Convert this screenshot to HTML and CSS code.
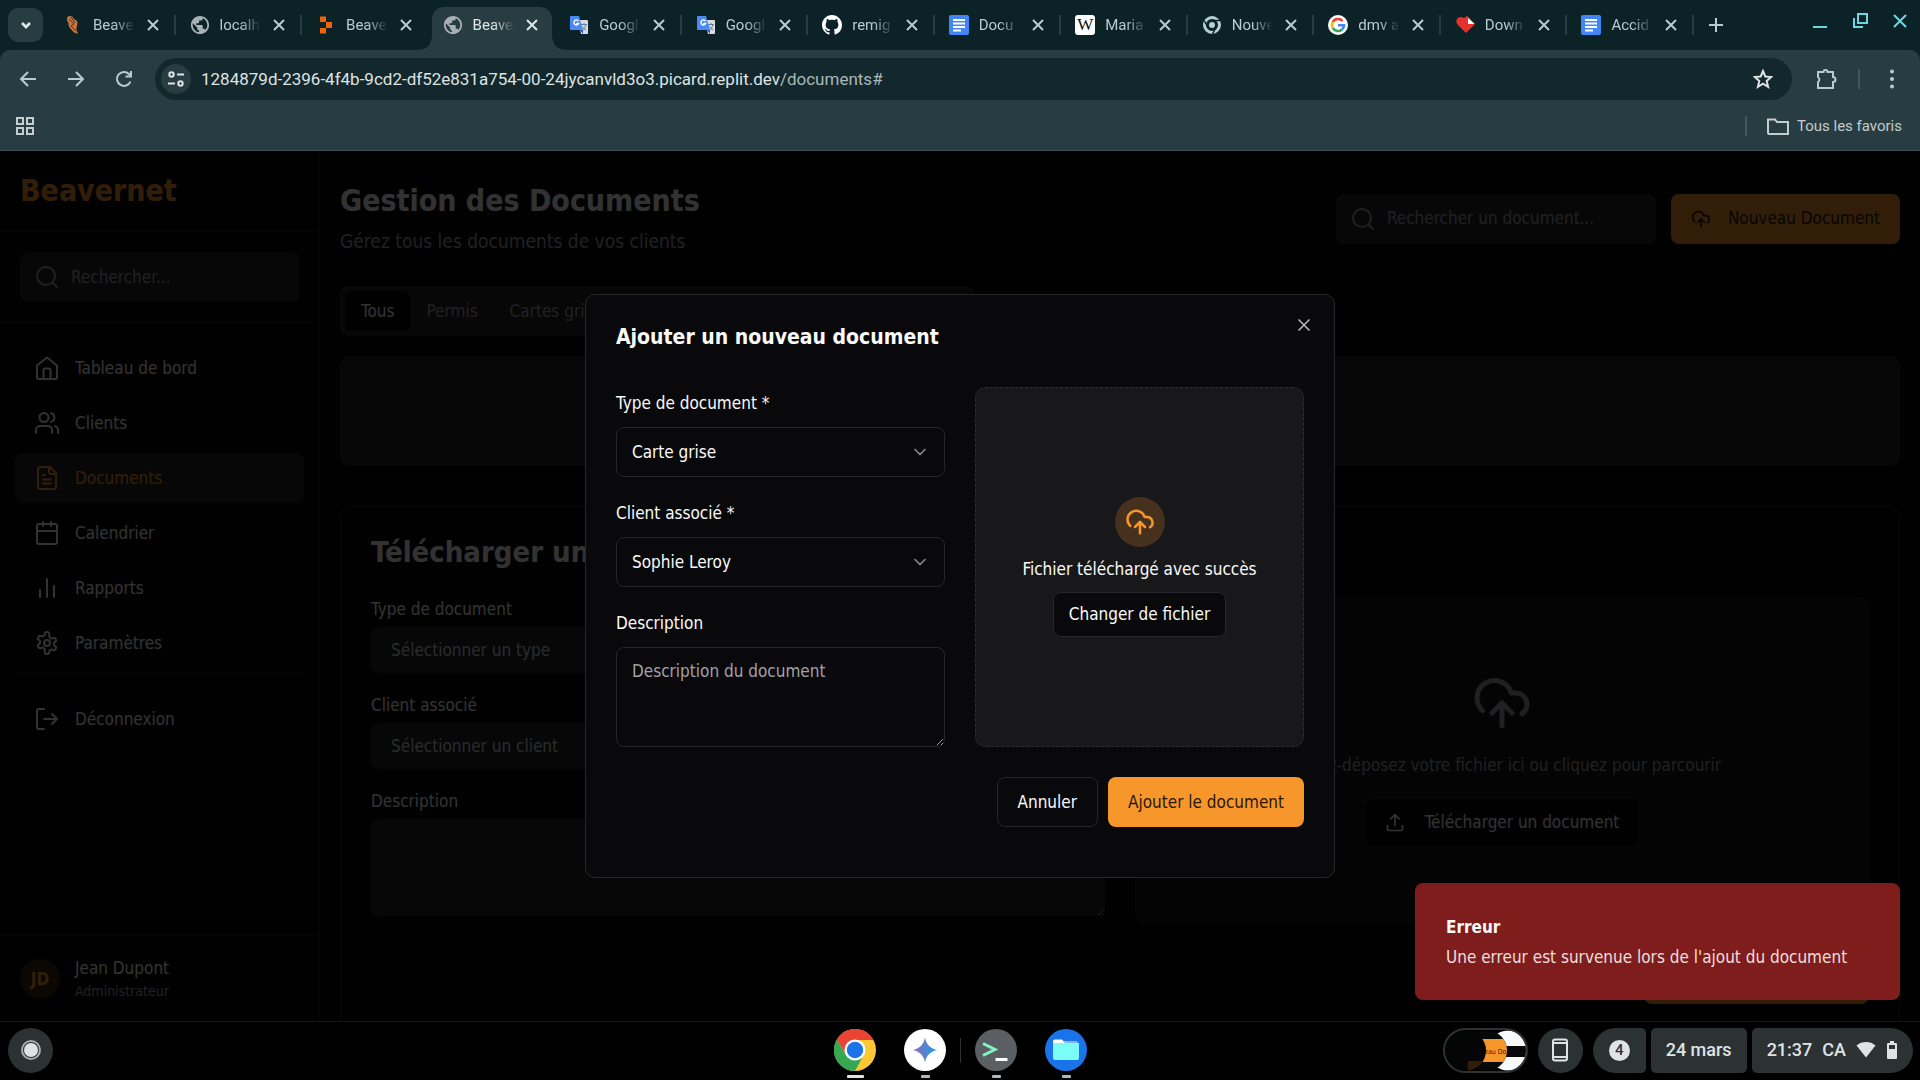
FILE: index.html
```html
<!DOCTYPE html>
<html lang="fr">
<head>
<meta charset="utf-8">
<meta name="viewport" content="width=device-width, initial-scale=1">
<title>Beavernet</title>
<link rel="stylesheet" href="styles.css">
</head>
<body>
<svg class="sprite" aria-hidden="true">
  <defs>
    <symbol id="i-x" viewBox="0 0 24 24"><path d="M18 6 6 18M6 6l12 12"/></symbol>
    <symbol id="i-tabx" viewBox="0 0 20 20"><path d="M5 5l10 10M15 5L5 15"/></symbol>
    <symbol id="i-chevron" viewBox="0 0 24 24"><path d="m6 9 6 6 6-6"/></symbol>
    <symbol id="i-search" viewBox="0 0 24 24"><circle cx="11" cy="11" r="9"/><path d="m22 22-4.5-4.5"/></symbol>
    <symbol id="i-cloud" viewBox="0 0 24 24"><path d="M4.2 15.1A7 7 0 1 1 15.71 8h1.79a4.5 4.5 0 0 1 2.5 8.24"/><path d="M12 21v-9"/><path d="m16 16-4-4-4 4"/></symbol>
    <symbol id="i-upload" viewBox="0 0 24 24"><path d="M21 15v4a2 2 0 0 1-2 2H5a2 2 0 0 1-2-2v-4M17 7l-5-5-5 5M12 2v13"/></symbol>
    <symbol id="i-home" viewBox="0 0 24 24"><path d="M2 9.5 12 1.500l10 8V21a2 2 0 0 1-2 2H4a2 2 0 0 1-2-2z"/><path d="M8.500 23v-8.500a2 2 0 0 1 2-2h3a2 2 0 0 1 2 2V23"/></symbol>
    <symbol id="i-users" viewBox="0 0 24 24"><path d="M17 22v-3a4 4 0 0 0-4-4H5a4 4 0 0 0-4 4v3"/><circle cx="9" cy="6.500" r="4.500"/><path d="M23 22v-3a4 4 0 0 0-3-3.870M16 2.130a4.500 4.500 0 0 1 0 8.740"/></symbol>
    <symbol id="i-file" viewBox="0 0 24 24"><path d="M15 1H5a2 2 0 0 0-2 2v18a2 2 0 0 0 2 2h14a2 2 0 0 0 2-2V7z"/><path d="M14 1v5a2 2 0 0 0 2 2h5M10 9H8M16 13.500H8M16 17.500H8"/></symbol>
    <symbol id="i-calendar" viewBox="0 0 24 24"><path d="M8 1v4M16 1v4M2 10h20"/><rect x="2" y="3" width="20" height="20" rx="2"/></symbol>
    <symbol id="i-bars" viewBox="0 0 24 24"><path d="M12 21V3M19 21V10M5 21v-7"/></symbol>
    <symbol id="i-settings" viewBox="0 0 24 24"><path d="M12.220 1h-.44a2 2 0 0 0-2 2v.18a2 2 0 0 1-1 1.730l-.43.25a2 2 0 0 1-2 0l-.15-.08a2 2 0 0 0-2.730.730l-.22.38a2 2 0 0 0 .730 2.730l.15.1a2 2 0 0 1 1 1.720v.510a2 2 0 0 1-1 1.740l-.15.090a2 2 0 0 0-.730 2.730l.22.38a2 2 0 0 0 2.730.730l.15-.08a2 2 0 0 1 2 0l.43.25a2 2 0 0 1 1 1.730V21a2 2 0 0 0 2 2h.44a2 2 0 0 0 2-2v-.18a2 2 0 0 1 1-1.730l.43-.25a2 2 0 0 1 2 0l.15.08a2 2 0 0 0 2.730-.730l.22-.39a2 2 0 0 0-.730-2.730l-.15-.08a2 2 0 0 1-1-1.740v-.5a2 2 0 0 1 1-1.740l.15-.090a2 2 0 0 0 .730-2.730l-.22-.38a2 2 0 0 0-2.730-.730l-.15.08a2 2 0 0 1-2 0l-.43-.25a2 2 0 0 1-1-1.730V3a2 2 0 0 0-2-2z"/><circle cx="12" cy="12" r="3"/></symbol>
    <symbol id="i-logout" viewBox="0 0 24 24"><path d="M9 22H4a2 2 0 0 1-2-2V4a2 2 0 0 1 2-2h5M17 17l5-5-5-5M22 12H9"/></symbol>
    <symbol id="i-globe" viewBox="1 1 22 22"><path fill="currentColor" d="M12 2C6.480 2 2 6.480 2 12s4.480 10 10 10 10-4.480 10-10S17.520 2 12 2zm-1 17.930c-3.950-.49-7-3.850-7-7.930 0-.62.08-1.210.21-1.790L9 15v1c0 1.100.9 2 2 2v1.930zm6.900-2.540c-.26-.81-1-1.390-1.900-1.390h-1v-3c0-.55-.45-1-1-1H8v-2h2c.55 0 1-.45 1-1V7h2c1.100 0 2-.9 2-2v-.41c2.930 1.190 5 4.060 5 7.410 0 2.080-.8 3.970-2.100 5.390z"/></symbol>
    <symbol id="i-translate" viewBox="0 0 20 20"><path d="M9 5h9a1 1 0 0 1 1 1v12a1 1 0 0 1-1 1h-6z" fill="#dadce0"/><path d="M12 9.500h6M15 8v1.500M13.500 15c2-1.500 3-3 3.200-5.500M13.500 11.500c.7 1.500 2 2.700 3.700 3.500" stroke="#5f7f9f" fill="none"/><path d="M2 1h8l4 14H2a1 1 0 0 1-1-1V2a1 1 0 0 1 1-1z" fill="#4a8af4"/><path d="m11 15 3 4v-4z" fill="#3050c8"/><path d="M9.500 6A2.500 2.500 0 1 0 9.700 8.500H7.300" stroke="#fff" fill="none" stroke-width="1.400"/></symbol>
    <symbol id="i-docs" viewBox="0 0 20 20"><rect width="20" height="20" rx="2" fill="#4285f4"/><path d="M4 5h12M4 8.500h12M4 12h12M4 15.500h8" stroke="#fff" stroke-width="1.800" fill="none"/></symbol>
  </defs>
</svg>

<header class="browser">
  <div class="tabstrip">
    <button class="tab-search" aria-label="Rechercher des onglets"><svg class="ico s16 bold" viewBox="0 0 24 24"><use href="#i-chevron"/></svg></button>
    <div class="tabs">
      <div class="tab"><svg class="fav" viewBox="0 0 20 20"><path d="M5 1.500c3-1 5 0 5.500 2L14 6c1.500 3-1 6-.5 9l1.500 4-4-1.500C8 14 5 12 5.500 8 3.500 6 3.500 3 5 1.500z" fill="#c8743f"/><path d="M6 4l5 5-3 2 5 5M8 2l4 6" stroke="#54301f" fill="none"/></svg><span class="tab-title">Beave</span><button class="tab-close" aria-label="Fermer"><svg class="ico s20"><use href="#i-tabx"/></svg></button></div>
      <div class="tab"><svg class="fav grey"><use href="#i-globe"/></svg><span class="tab-title">localh</span><button class="tab-close" aria-label="Fermer"><svg class="ico s20"><use href="#i-tabx"/></svg></button></div>
      <div class="tab no-line"><svg class="fav" viewBox="0 0 20 20"><path d="M4 1.500h6v5.500H4zM10 7h6v6h-6zM4 13h6v5.500H4z" fill="#f26207"/></svg><span class="tab-title">Beave</span><button class="tab-close" aria-label="Fermer"><svg class="ico s20"><use href="#i-tabx"/></svg></button></div>
      <div class="tab active"><svg class="fav grey"><use href="#i-globe"/></svg><span class="tab-title">Beave</span><button class="tab-close" aria-label="Fermer"><svg class="ico s20"><use href="#i-tabx"/></svg></button></div>
      <div class="tab"><svg class="fav"><use href="#i-translate"/></svg><span class="tab-title">Googl</span><button class="tab-close" aria-label="Fermer"><svg class="ico s20"><use href="#i-tabx"/></svg></button></div>
      <div class="tab"><svg class="fav"><use href="#i-translate"/></svg><span class="tab-title">Googl</span><button class="tab-close" aria-label="Fermer"><svg class="ico s20"><use href="#i-tabx"/></svg></button></div>
      <div class="tab"><svg class="fav" viewBox="0 0 16 16"><path fill="#fff" d="M8 0C3.580 0 0 3.580 0 8c0 3.540 2.290 6.530 5.470 7.590.4.070.55-.17.55-.38 0-.19-.01-.82-.01-1.490-2.010.37-2.530-.49-2.690-.94-.09-.23-.48-.94-.82-1.130-.28-.15-.68-.52-.01-.53.63-.01 1.080.58 1.230.82.72 1.210 1.870.87 2.330.66.070-.52.28-.87.510-1.070-1.780-.2-3.640-.89-3.640-3.950 0-.87.31-1.590.82-2.150-.08-.2-.36-1.020.08-2.120 0 0 .67-.21 2.200.82.64-.18 1.320-.27 2-.27s1.360.09 2 .27c1.530-1.040 2.200-.82 2.200-.82.44 1.100.16 1.920.08 2.120.51.56.82 1.270.82 2.150 0 3.070-1.870 3.750-3.650 3.950.29.25.54.73.54 1.480 0 1.070-.01 1.930-.01 2.200 0 .21.15.46.55.38A8.010 8.010 0 0 0 16 8c0-4.420-3.580-8-8-8z"/></svg><span class="tab-title">remig</span><button class="tab-close" aria-label="Fermer"><svg class="ico s20"><use href="#i-tabx"/></svg></button></div>
      <div class="tab"><svg class="fav"><use href="#i-docs"/></svg><span class="tab-title">Docu</span><button class="tab-close" aria-label="Fermer"><svg class="ico s20"><use href="#i-tabx"/></svg></button></div>
      <div class="tab"><span class="fav wiki">W</span><span class="tab-title">Maria</span><button class="tab-close" aria-label="Fermer"><svg class="ico s20"><use href="#i-tabx"/></svg></button></div>
      <div class="tab"><svg class="fav" viewBox="0 0 20 20" fill="none" stroke="#b5d0d5"><circle cx="10" cy="10" r="7.500" stroke-width="3"/><circle cx="10" cy="10" r="3" fill="#b5d0d5" stroke="none"/><path d="M10 5.500h8M6 12.500 2.500 6M14 12.500 10.500 19" stroke="#0b2327" stroke-width="1.500"/></svg><span class="tab-title">Nouve</span><button class="tab-close" aria-label="Fermer"><svg class="ico s20"><use href="#i-tabx"/></svg></button></div>
      <div class="tab"><svg class="fav" viewBox="0 0 20 20" fill="none" stroke-width="2.600"><circle cx="10" cy="10" r="10" fill="#fff"/><path d="M14.500 6A6 6 0 0 0 4.800 7" stroke="#ea4335"/><path d="M4.800 7a6 6 0 0 0 0 6" stroke="#fbbc05"/><path d="M4.800 13a6 6 0 0 0 9.200 1.500" stroke="#34a853"/><path d="M14 14.500a6 6 0 0 0 2-4.300h-6" stroke="#4285f4"/></svg><span class="tab-title">dmv a</span><button class="tab-close" aria-label="Fermer"><svg class="ico s20"><use href="#i-tabx"/></svg></button></div>
      <div class="tab"><svg class="fav" viewBox="0 0 20 20"><path d="M11 18 2.500 9.500C-1 5 4-.5 9 3c2-1.500 3-2 4-1.500L20 9z" fill="#e5322d"/><path d="M13 3v6h6.500z" fill="#fff"/></svg><span class="tab-title">Down</span><button class="tab-close" aria-label="Fermer"><svg class="ico s20"><use href="#i-tabx"/></svg></button></div>
      <div class="tab"><svg class="fav"><use href="#i-docs"/></svg><span class="tab-title">Accid</span><button class="tab-close" aria-label="Fermer"><svg class="ico s20"><use href="#i-tabx"/></svg></button></div>
    </div>
    <button class="new-tab" aria-label="Nouvel onglet"><svg class="ico s16 bold" viewBox="0 0 16 16"><path d="M8 1v14M1 8h14"/></svg></button>
    <div class="window-buttons">
      <button aria-label="Réduire"><svg class="ico s16" viewBox="0 0 16 16"><path d="M1 14h14"/></svg></button>
      <button aria-label="Restaurer"><svg class="ico s16" viewBox="0 0 16 16"><path d="M6 1h9v9H6zM2 5v9h9"/></svg></button>
      <button aria-label="Fermer la fenêtre"><svg class="ico s16" viewBox="0 0 16 16"><path d="M2 2l12 12M14 2 2 14"/></svg></button>
    </div>
  </div>
  <div class="toolbar">
    <div class="nav-buttons">
      <button aria-label="Retour"><svg class="ico s20" viewBox="0 0 20 20"><path d="M18 10H3M10 3l-7 7 7 7"/></svg></button>
      <button aria-label="Avancer"><svg class="ico s20" viewBox="0 0 20 20"><path d="M2 10h15M10 3l7 7-7 7"/></svg></button>
      <button aria-label="Actualiser"><svg class="ico s20" viewBox="0 0 20 20"><path d="M16.500 12.500A7 7 0 1 1 15 5l2 2M17 2v5.500h-5.500"/></svg></button>
    </div>
    <div class="omnibox">
      <button class="site-info" aria-label="Informations sur le site"><svg class="ico s20" viewBox="0 0 20 20"><circle cx="5.500" cy="5.500" r="2.200"/><path d="M11 5.500h7M2 14.500h7"/><circle cx="14.500" cy="14.500" r="2.200"/></svg></button>
      <div class="url">1284879d-2396-4f4b-9cd2-df52e831a754-00-24jycanvld3o3.picard.replit.dev<span class="path">/documents#</span></div>
      <button class="star" aria-label="Ajouter aux favoris"><svg class="ico s20" viewBox="0 0 20 20"><path d="m10 2 2.300 5.500 6 .5-4.600 3.900 1.400 5.900-5.100-3.200-5.100 3.200 1.400-5.900L1.700 8l6-.5z"/></svg></button>
    </div>
    <button class="extensions" aria-label="Extensions"><svg class="ico s24" viewBox="0 0 24 24"><path d="M4 5h5.500a2 2 0 0 1 4 0H19v5a2.500 2.500 0 0 1 0 5v6H4v-6a3 3 0 0 0 0-5z"/></svg></button>
    <span class="vline"></span>
    <button class="kebab" aria-label="Menu"><svg class="s20" viewBox="0 0 20 20" fill="currentColor"><circle cx="10" cy="2.500" r="2"/><circle cx="10" cy="10" r="2"/><circle cx="10" cy="17.500" r="2"/></svg></button>
  </div>
  <div class="bookmarks">
    <button aria-label="Applications"><svg class="ico s20" viewBox="0 0 20 20"><path d="M2 2h6v6H2zM12 2h6v6h-6zM2 12h6v6H2zM12 12h6v6h-6z"/></svg></button>
    <button class="all-bookmarks"><span class="vline"></span><svg class="ico s24" viewBox="0 0 24 24"><path d="M2 5.500h7l2 2.500h11v12H3a1 1 0 0 1-1-1z"/></svg>Tous les favoris</button>
  </div>
</header>

<div class="app">
  <aside class="sidebar">
    <div class="brand">Beavernet</div>
    <div class="side-search">
      <label class="search"><svg class="ico s24"><use href="#i-search"/></svg><input type="text" placeholder="Rechercher..." aria-label="Rechercher"></label>
    </div>
    <nav class="side-nav">
      <a href="#"><svg class="ico s24"><use href="#i-home"/></svg>Tableau de bord</a>
      <a href="#"><svg class="ico s24"><use href="#i-users"/></svg>Clients</a>
      <a href="#" class="current"><svg class="ico s24"><use href="#i-file"/></svg>Documents</a>
      <a href="#"><svg class="ico s24"><use href="#i-calendar"/></svg>Calendrier</a>
      <a href="#"><svg class="ico s24"><use href="#i-bars"/></svg>Rapports</a>
      <a href="#"><svg class="ico s24"><use href="#i-settings"/></svg>Paramètres</a>
      <hr>
      <a href="#"><svg class="ico s24"><use href="#i-logout"/></svg>Déconnexion</a>
    </nav>
    <div class="user">
      <span class="avatar">JD</span>
      <div><div class="user-name">Jean Dupont</div><div class="user-role">Administrateur</div></div>
    </div>
  </aside>

  <main class="content">
    <div class="page-head">
      <div class="page-title">
        <h1>Gestion des Documents</h1>
        <p>Gérez tous les documents de vos clients</p>
      </div>
      <div class="head-actions">
        <label class="search wide"><svg class="ico s24"><use href="#i-search"/></svg><input type="text" placeholder="Rechercher un document..." aria-label="Rechercher un document"></label>
        <button class="btn primary with-icon"><svg class="ico s20"><use href="#i-cloud"/></svg>Nouveau Document</button>
      </div>
    </div>
    <div class="filter" role="tablist">
      <button role="tab" aria-selected="true">Tous</button>
      <button role="tab">Permis</button>
      <button role="tab">Cartes grises</button>
    </div>
    <section class="empty"></section>
    <section class="card">
      <h2>Télécharger un document</h2>
      <div class="card-grid">
        <div class="fields">
          <div class="field"><label for="p-type">Type de document</label><select id="p-type"><option>Sélectionner un type</option></select></div>
          <div class="field"><label for="p-client">Client associé</label><select id="p-client"><option>Sélectionner un client</option></select></div>
          <div class="field"><label for="p-desc">Description</label><textarea id="p-desc"></textarea></div>
        </div>
        <div class="drop">
          <svg class="ico s60"><use href="#i-cloud"/></svg>
          <p>Glissez-déposez votre fichier ici ou cliquez pour parcourir</p>
          <button class="btn outline with-icon"><svg class="ico s20"><use href="#i-upload"/></svg>Télécharger un document</button>
        </div>
      </div>
      <div class="card-foot"><button class="btn primary">Enregistrer le document</button></div>
    </section>
  </main>

  <div class="overlay">
    <div class="dialog" role="dialog" aria-labelledby="dlg-title">
      <button class="dialog-close" aria-label="Fermer"><svg class="ico s20"><use href="#i-x"/></svg></button>
      <h2 id="dlg-title">Ajouter un nouveau document</h2>
      <form class="dialog-grid">
        <div class="dialog-fields">
          <div class="dfield"><label for="d-type">Type de document *</label><div class="select"><select id="d-type"><option>Carte grise</option></select><svg class="ico s20"><use href="#i-chevron"/></svg></div></div>
          <div class="dfield"><label for="d-client">Client associé *</label><div class="select"><select id="d-client"><option>Sophie Leroy</option></select><svg class="ico s20"><use href="#i-chevron"/></svg></div></div>
          <div class="dfield"><label for="d-desc">Description</label><textarea id="d-desc" placeholder="Description du document"></textarea></div>
        </div>
        <div class="upload">
          <span class="upload-icon"><svg class="ico s30"><use href="#i-cloud"/></svg></span>
          <p>Fichier téléchargé avec succès</p>
          <button type="button" class="btn outline small">Changer de fichier</button>
        </div>
      </form>
      <div class="dialog-foot">
        <button class="btn outline">Annuler</button>
        <button class="btn primary">Ajouter le document</button>
      </div>
    </div>
  </div>

  <div class="toast" role="alert">
    <strong>Erreur</strong>
    <p>Une erreur est survenue lors de l'ajout du document</p>
  </div>
</div>

<footer class="shelf">
  <button class="launcher" aria-label="Lanceur"><svg class="s24" viewBox="0 0 24 24"><circle cx="12" cy="12" r="9" fill="none" stroke="#a6acad" stroke-width="2"/><circle cx="12" cy="12" r="7" fill="#dfe3e4"/></svg></button>
  <div class="apps">
    <button class="app-icon running focus" aria-label="Chrome"><svg viewBox="0 0 42 42"><circle cx="21" cy="21" r="21" fill="#fcc934"/><path d="M21 11h18.500A21 21 0 0 0 2.800 10.500L12.300 26z" fill="#ea4335"/><path d="M2.800 10.500A21 21 0 0 0 21 42l8.700-16H12z" fill="#34a853"/><circle cx="21" cy="21" r="10.500" fill="#fff"/><circle cx="21" cy="21" r="8.200" fill="#1a73e8"/></svg></button>
    <button class="app-icon running" aria-label="Gemini"><svg viewBox="0 0 42 42"><defs><linearGradient id="gem" x1="0" x2="1"><stop offset="0" stop-color="#9168c0"/><stop offset=".5" stop-color="#5684d1"/><stop offset="1" stop-color="#1ba1e3"/></linearGradient></defs><circle cx="21" cy="21" r="21" fill="#fff"/><path d="M21 8.500c1.200 7 5.500 11.300 12.500 12.500-7 1.200-11.300 5.500-12.500 12.500-1.200-7-5.500-11.300-12.500-12.500 7-1.200 11.300-5.500 12.500-12.500z" fill="url(#gem)"/></svg></button>
    <span class="shelf-line"></span>
    <button class="app-icon running" aria-label="Terminal"><svg viewBox="0 0 42 42"><circle cx="21" cy="21" r="21" fill="#5b5f64"/><path d="m8 14.500 12 6-12 6" fill="none" stroke="#81f5c0" stroke-width="3"/><path d="M20.500 30.500h12" stroke="#fff" stroke-width="3"/></svg></button>
    <button class="app-icon running" aria-label="Fichiers"><svg viewBox="0 0 42 42"><circle cx="21" cy="21" r="21" fill="#1a73e8"/><path d="M8 12.500a2 2 0 0 1 2-2h7l3.500 3.500H8z" fill="#fff"/><path d="M18 12h13a2 2 0 0 1 2 2H20z" fill="#8ab4f8"/><path d="M8 14h26v15a2 2 0 0 1-2 2H10a2 2 0 0 1-2-2z" fill="#7cfcf6"/></svg></button>
  </div>
  <div class="tray">
    <button class="tote" aria-label="Fichiers récents"><svg viewBox="0 0 85 45"><defs><clipPath id="c1"><circle cx="65" cy="22.500" r="20"/></clipPath><clipPath id="c2"><circle cx="44" cy="22.500" r="20"/></clipPath><clipPath id="c3"><circle cx="23" cy="22.500" r="20"/></clipPath></defs><g clip-path="url(#c1)"><path d="M40 0h45v45H40z" fill="#f8f9fa"/><path d="M40 18h45v11H40z" fill="#08080a"/></g><g clip-path="url(#c2)"><path d="M20 0h50v45H20z" fill="#08080a"/><path d="M20 11h50v23H20z" fill="#f7972b"/><text x="41" y="26" class="tote-text">eau Do</text></g><g clip-path="url(#c3)"><path d="M0 0h45v45H0z" fill="#050505"/><path d="M25 33h20v12H25z" fill="#311e08"/></g></svg></button>
    <button class="pill round" aria-label="Téléphone"><svg class="s24" viewBox="0 0 24 24" fill="none" stroke="#dfe3e4" stroke-width="2"><rect x="5" y="1.500" width="14" height="21" rx="2"/><path d="M5 5h14M5 19h14"/></svg></button>
    <button class="pill left"><span class="count">4</span></button>
    <button class="pill">24 mars</button>
    <button class="pill right">21:37<span>CA</span><svg class="s20" viewBox="0 0 20 20"><path d="M10 17.500.5 5.500a15 15 0 0 1 19 0z" fill="#dfe3e4"/></svg><svg class="battery" viewBox="0 0 12 20"><path d="M4 1h4v2h2a1 1 0 0 1 1 1v14a1 1 0 0 1-1 1H2a1 1 0 0 1-1-1V4a1 1 0 0 1 1-1h2z" fill="#dfe3e4"/><path d="M3 5h6v4H3z" fill="#2c3232"/></svg></button>
  </div>
</footer>
</body>
</html>
```
FILE: styles.css
```css
:root {
  --bg: #09090b;
  --fg: #fafafa;
  --muted-fg: #a1a1aa;
  --surface: #27272a;
  --surface-low: #18181b;
  --border: #27272a;
  --primary: #f7972b;
  --primary-fg: #2a1703;
  --strip: #0b2327;
  --chrome: #283d41;
  --chrome-fg: #b5cdd1;
  --pill: #2c3232;
  --ui: "DejaVu Sans Condensed", "Noto Sans", sans-serif;
  --system: Roboto, sans-serif;
}

* { box-sizing: border-box; }

body {
  margin: 0;
  height: 100vh;
  display: grid;
  grid-template-columns: minmax(0, 1fr);
  grid-template-rows: auto minmax(0, 1fr) auto;
  background: #000;
  color: var(--fg);
  font: 17px/25px var(--ui);
  color-scheme: dark;
  overflow: hidden;
}

h1, h2, p { margin: 0; }
a { color: inherit; text-decoration: none; }
button, input, select, textarea { font: inherit; color: inherit; margin: 0; }
button { background: none; border: 0; padding: 0; display: flex; align-items: center; justify-content: center; }

.sprite { position: absolute; width: 0; height: 0; }
.ico { fill: none; stroke: currentColor; stroke-width: 2; stroke-linecap: round; stroke-linejoin: round; flex: none; }
.s16 { width: 16px; height: 16px; }
.s20 { width: 20px; height: 20px; }
.s24 { width: 24px; height: 24px; }
.s30 { width: 30px; height: 30px; }
.s60 { width: 60px; height: 60px; }
.bold { stroke-width: 2; }

/* Browser window */
.browser { background: var(--strip); color: var(--chrome-fg); font: 15px/20px var(--system); border-bottom: 1px solid #3d4f52; }
.browser .ico { stroke-linecap: butt; stroke-linejoin: miter; }
.tabstrip { display: flex; height: 50px; padding-left: 8px; }
.tab-search { width: 35px; height: 34px; margin: 8px 6px 0 0; border-radius: 10px; background: var(--chrome); color: #dfe6e8; }
.tab-search .ico { stroke-width: 4; }
.tabs { display: flex; flex: 1; min-width: 0; }
.tab { flex: 1; min-width: 0; display: flex; align-items: center; padding: 0 13px 0 14px; position: relative; }
.tab::after { content: ""; position: absolute; right: 0; top: 15px; height: 20px; width: 2px; background: var(--chrome); }
.tab.no-line::after { display: none; }
.tab.active { color: #dfe6e8; isolation: isolate; }
.tab.active::before { content: ""; position: absolute; z-index: -1; inset: 7px 3px 0; border-radius: 12px 12px 0 0; background: var(--chrome); }
.tab.active::after {
  z-index: -2; top: auto; bottom: 0; left: -9px; right: -9px; width: auto; height: 12px;
  background:
    radial-gradient(circle at 0 0, transparent 11px, var(--chrome) 12px) left / 12px 12px no-repeat,
    radial-gradient(circle at 100% 0, transparent 11px, var(--chrome) 12px) right / 12px 12px no-repeat;
}
.fav { width: 20px; height: 20px; flex: none; margin-right: 10px; }
.fav.grey { color: #a9b1b6; }
.wiki { background: #fff; color: #111; border-radius: 3px; font: 17px/20px "Liberation Serif", serif; text-align: center; }
.tab-title { flex: 1; min-width: 0; white-space: nowrap; mask-image: linear-gradient(90deg, #000 50%, transparent); }
.tab-close { margin-left: 8px; }
.new-tab { width: 44px; height: 50px; }
.window-buttons { display: flex; gap: 24px; height: 42px; margin: 0 12px 0 74px; color: #6fd5e3; }
.toolbar { display: flex; align-items: center; height: 57px; padding: 0 18px; border-radius: 10px 10px 0 0; background: var(--chrome); }
.nav-buttons { display: flex; gap: 28px; margin-right: 21px; }
.omnibox { flex: 1; display: flex; align-items: center; height: 42px; padding: 0 19px 0 6px; border-radius: 21px; background: #12282c; font-size: 17px; color: #dfe3e4; }
.site-info { width: 30px; height: 30px; border-radius: 50%; background: var(--chrome); margin-right: 10px; }
.url { flex: 1; white-space: nowrap; }
.path { color: #aab8ba; }
.extensions { margin: 0 20px 0 22px; }
.vline { width: 2px; height: 20px; background: #41575b; }
.kebab { margin-left: 22px; }
.bookmarks { display: flex; justify-content: space-between; height: 43px; padding: 0 18px 6px 15px; background: var(--chrome); color: #c3ccce; }
.all-bookmarks { gap: 7px; }
.all-bookmarks .vline { margin-right: 12px; }

/* Application */
.app { position: relative; display: flex; min-height: 0; background: var(--bg); overflow: hidden; }
.sidebar { width: 320px; flex: none; display: flex; flex-direction: column; border-right: 1px solid var(--border); }
.brand { height: 81px; padding-left: 20px; border-bottom: 1px solid var(--border); color: var(--primary); font-weight: 700; font-size: 30px; line-height: 80px; }
.side-search { padding: 20px; border-bottom: 1px solid var(--border); }
.search { display: flex; align-items: center; gap: 12px; height: 50px; padding: 0 15px; border-radius: 8px; background: var(--surface); color: var(--muted-fg); }
.search.wide { width: 320px; }
.search input { flex: 1; min-width: 0; padding: 0; border: 0; background: none; outline: 0; }
.search input::placeholder { color: var(--muted-fg); }
.side-nav { flex: 1; padding: 20px 15px; display: flex; flex-direction: column; gap: 5px; }
.side-nav a { display: flex; align-items: center; gap: 16px; height: 50px; padding-left: 20px; border-radius: 8px; }
.side-nav .current { background: var(--surface); color: var(--primary); }
.side-nav hr { width: 100%; margin: 0 0 15px; border: 0; border-top: 1px solid var(--border); }
.user { display: flex; align-items: center; gap: 15px; padding: 20px; border-top: 1px solid var(--border); }
.avatar { width: 40px; height: 40px; border-radius: 50%; background: #38250f; color: var(--primary); font-weight: 700; line-height: 40px; text-align: center; }
.user-role { font-size: 14px; line-height: 20px; color: var(--muted-fg); }

.content { flex: 1; min-width: 0; padding: 30px 20px 0; }
.page-head { display: flex; justify-content: space-between; align-items: center; height: 75px; margin-bottom: 30px; }
.page-title { padding-top: 4px; }
h1 { font-size: 30px; line-height: 40px; }
.page-head p { font-size: 19px; line-height: 40px; color: var(--muted-fg); }
.head-actions { display: flex; gap: 15px; }
.btn { height: 50px; padding: 0 20px; border-radius: 8px; white-space: nowrap; }
.btn.small { height: 45px; padding: 0 15px; }
.primary { background: var(--primary); color: var(--primary-fg); }
.primary.with-icon { gap: 17px; }
.outline { background: var(--bg); border: 1px solid var(--border); }
.outline.with-icon { gap: 20px; }
.filter { display: flex; width: 634px; max-width: 100%; height: 50px; padding: 5px; margin-bottom: 20px; border-radius: 8px; background: var(--surface); color: var(--muted-fg); }
.filter button { padding: 0 16px; border-radius: 6px; }
.filter [aria-selected="true"] { background: var(--bg); color: var(--fg); }
.empty { height: 110px; margin-bottom: 40px; border-radius: 10px; background: var(--surface); }
.card { padding: 30px 30px 60px; border: 1px solid var(--border); border-radius: 10px; }
.card h2 { font-size: 29px; line-height: 30px; margin-bottom: 30px; }
.card-grid { display: grid; grid-template-columns: 1fr 1fr; gap: 30px; }
.fields { display: grid; gap: 20px; padding-bottom: 7px; }
.field { display: grid; gap: 5px; }
.field select, .field textarea { appearance: none; width: 100%; height: 46px; padding: 0 20px; border: 0; border-radius: 8px; background: var(--surface); color: #d4d4d8; }
.field textarea { height: 97px; }
.drop { display: flex; flex-direction: column; align-items: center; justify-content: center; border: 1px dashed var(--border); border-radius: 10px; background: var(--surface-low); }
.drop .s60, .drop p { color: var(--muted-fg); }
.drop p { margin: 20px 0; }
.card-foot { display: flex; justify-content: flex-end; margin-top: 31px; }

/* Dialog */
.overlay { position: absolute; inset: 0; display: flex; align-items: center; justify-content: center; background: rgba(0, 0, 0, .8); }
.dialog { position: relative; width: 750px; max-width: 100%; padding: 30px 30px 50px; border: 1px solid var(--border); border-radius: 10px; background: var(--bg); }
.dialog h2 { font-size: 21px; line-height: 25px; margin-bottom: 37px; }
.dialog-close { position: absolute; top: 20px; right: 20px; color: #b4b4b6; }
.dialog-grid, .dialog-fields { display: grid; }
.dialog-grid { grid-template-columns: 1fr 1fr; gap: 30px; }
.dialog-fields { gap: 20px; }
.dfield { display: grid; gap: 8px; }
.dfield label { line-height: 32px; }
.select { display: grid; grid-template-columns: 1fr 35px; align-items: center; }
.select select { grid-area: 1 / 1 / 2 / 3; appearance: none; }
.select .ico { grid-area: 1 / 2; color: #8a8a8c; }
.dfield select, .dfield textarea { width: 100%; height: 50px; padding: 0 15px; border: 1px solid var(--border); border-radius: 8px; background: var(--bg); }
.dfield textarea { display: block; height: 100px; padding: 11px 15px; }
.dfield textarea::placeholder { color: var(--muted-fg); }
.upload { display: flex; flex-direction: column; align-items: center; justify-content: center; gap: 10px; border: 1px dashed #2e2e31; border-radius: 10px; background: var(--surface-low); }
.upload-icon { display: grid; place-items: center; width: 50px; height: 50px; border-radius: 50%; background: #45311e; color: var(--primary); }
.dialog-foot { display: flex; justify-content: flex-end; gap: 10px; margin-top: 30px; }

.toast { position: absolute; right: 20px; bottom: 21px; width: 485px; padding: 32px 31px 30px; border-radius: 8px; background: #7f1d1d; white-space: nowrap; }
.toast strong { display: block; margin-bottom: 5px; }
.toast p { color: #eedfdf; }

/* Shelf */
.shelf { display: grid; grid-template-columns: 1fr auto 1fr; align-items: center; height: 59px; padding: 0 7px 2px 8px; border-top: 1px solid #151515; background: #000; font: 500 18px/20px var(--system); color: #dfe3e4; }
.launcher, .round { width: 45px; height: 45px; border-radius: 50%; background: var(--pill); }
.apps { display: flex; align-items: center; gap: 28px; }
.app-icon { position: relative; width: 42px; height: 42px; }
.app-icon svg { width: 42px; height: 42px; }
.running::after { content: ""; position: absolute; top: 46px; width: 9px; height: 3px; border-radius: 1px; background: #a9bcc1; }
.running.focus::after { width: 17px; background: #dfe3e4; }
.shelf-line { width: 1px; height: 25px; margin: 0 -14px; background: #2c3232; }
.tray { display: flex; justify-content: flex-end; gap: 5px; }
.tote { width: 85px; height: 45px; margin-right: 5px; border: 2px solid var(--pill); border-radius: 23px; overflow: hidden; }
.tote svg { width: 85px; height: 45px; flex: none; }
.tote-text { font: 7px var(--ui); fill: #3a2208; }
.pill { height: 45px; padding: 0 15px; border-radius: 5px; background: var(--pill); gap: 10px; white-space: nowrap; }
.pill.round { padding: 0; margin-right: 5px; border-radius: 50%; }
.pill.left { padding: 0 16px; border-radius: 23px 5px 5px 23px; }
.pill.right { border-radius: 5px 23px 23px 5px; }
.count { width: 21px; height: 21px; border-radius: 50%; background: #dfe3e4; color: var(--pill); font-size: 15px; line-height: 21px; }
.battery { width: 12px; height: 20px; }
```
